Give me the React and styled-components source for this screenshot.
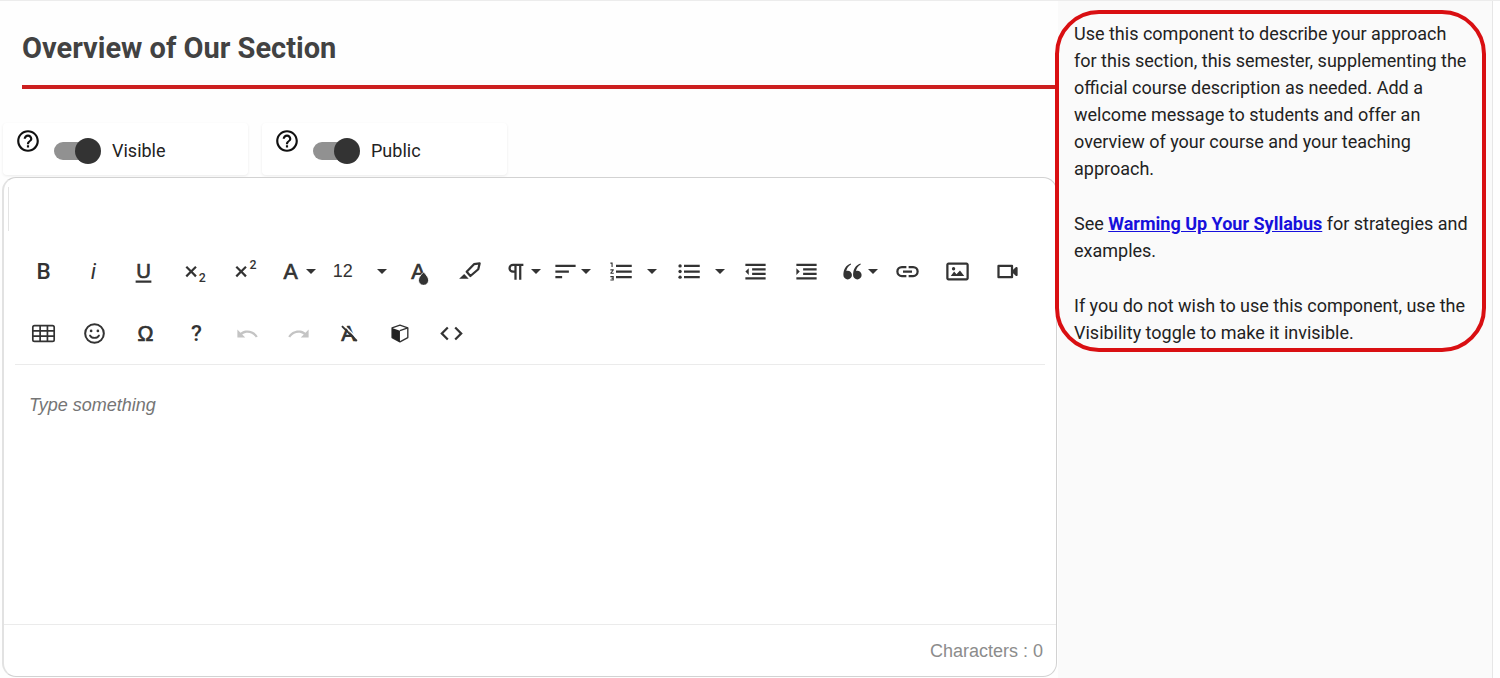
import React from "react";
import styled, { createGlobalStyle } from "styled-components";
import { MdHelpOutline } from "react-icons/md";

const GlobalStyle = createGlobalStyle`
  *, *::before, *::after { box-sizing: border-box; }
  body { margin: 0; background: #fefefe; font-family: Roboto, "Liberation Sans", sans-serif; color: #222; }
`;

const Page = styled.div`
  display: flex;
  align-items: stretch;
  min-height: 100vh;
  padding-right: 7px;
  border-top: 1px solid #ececec;
`;

const Main = styled.main`
  flex: 1;
  min-width: 0;
  display: flex;
  flex-direction: column;
`;

const Heading = styled.h1`
  margin: 0 0 0 22px;
  padding: 28px 0 18px;
  border-bottom: 4px solid #cc1f1f;
  font-size: 29px;
  line-height: 38px;
  font-weight: 700;
  color: #424242;
`;

const Toggles = styled.div`
  display: flex;
  gap: 14px;
  padding: 34px 0 2px 3px;
`;

const ToggleCard = styled.div`
  display: flex;
  align-items: flex-start;
  width: 245px;
  height: 52px;
  padding: 5px 0 0 12px;
  border-radius: 4px;
  background: #fff;
  box-shadow: 0 1px 3px rgba(0, 0, 0, 0.08);
`;

const HelpButton = styled.button`
  display: flex;
  padding: 0;
  border: 0;
  background: none;
  color: #111;
`;

const ToggleLabel = styled.label`
  display: flex;
  align-items: center;
  gap: 11px;
  margin: 10px 0 0 13px;
  font-size: 18px;
  line-height: 24px;
`;

const Switch = styled.input`
  appearance: none;
  position: relative;
  width: 47px;
  height: 26px;
  margin: 0;
  &::before {
    content: "";
    position: absolute;
    left: 0;
    top: 4px;
    width: 42px;
    height: 18px;
    border-radius: 9px;
    background: #919191;
  }
  &::after {
    content: "";
    position: absolute;
    left: ${(p) => (p.checked ? 21 : 0)}px;
    top: 0;
    width: 26px;
    height: 26px;
    border-radius: 50%;
    background: #333;
  }
`;

const Editor = styled.section`
  flex: 1;
  display: flex;
  flex-direction: column;
  margin: 0 1px 1px 2px;
  border: 1px solid #d2d2d2;
  border-left: 2px solid #e2e2e2;
  border-radius: 14px;
  background: #fff;
`;

const TopStrip = styled.div`
  height: 44px;
  margin: 9px 0 9px 4px;
  border-left: 1px solid #e4e4e4;
`;

const Toolbar = styled.div`
  display: flex;
  flex-direction: column;
  margin: 0 11px;
  padding: 0 12px 0 3px;
  border-bottom: 1px solid #ebebeb;
`;

const ToolRow = styled.div`
  display: flex;
  align-items: center;
  justify-content: ${(p) => (p.$spread ? "space-between" : "flex-start")};
  gap: ${(p) => (p.$spread ? 0 : 1)}px;
  height: 62px;
`;

const ToolButton = styled.button`
  display: flex;
  align-items: center;
  justify-content: ${(p) => (p.$wide ? "space-between" : "center")};
  gap: 2px;
  width: ${(p) => (p.$wide ? 73 : 50)}px;
  height: 44px;
  padding: ${(p) => (p.$wide ? "0 7px 0 12px" : p.$menu ? "0 0 0 3px" : "0")};
  border: 0;
  background: none;
  color: ${(p) => (p.disabled ? "#c4c4c4" : "#333")};
  font-family: "Liberation Sans", Arial, sans-serif;
  font-size: 18px;
`;

const Split = styled.div`
  display: flex;
`;

const CaretButton = styled(ToolButton)`
  width: 17px;
  padding-right: 4px;
`;

const Svg = styled.svg`
  flex: none;
  width: 27px;
  height: 27px;
  fill: currentColor;
  text {
    font-family: Roboto, sans-serif;
    font-weight: 500;
    text-anchor: middle;
  }
`;

const LightText = styled.text`
  && { font-weight: 400; }
`;

const SymbolText = styled.text`
  && {
    font-family: "Liberation Sans", Arial, sans-serif;
    font-weight: 400;
    stroke: currentColor;
    stroke-width: 0.6px;
  }
`;

const Caret = styled.span`
  border: 5px solid transparent;
  border-top-color: #333;
  border-bottom: 0;
`;

const Writing = styled.textarea`
  flex: 1;
  min-height: 257px;
  padding: 27px 25px;
  border: 0;
  outline: 0;
  resize: none;
  background: transparent;
  font-family: "Liberation Sans", Arial, sans-serif;
  font-size: 18px;
  line-height: 26px;
  &::placeholder { color: #757575; font-style: italic; opacity: 1; }
`;

const Counter = styled.div`
  padding: 13px 13px 12px;
  border-top: 1px solid #ebebeb;
  text-align: right;
  font-family: "Liberation Sans", Arial, sans-serif;
  font-size: 18px;
  line-height: 26px;
  color: #8c8c8c;
`;

const Aside = styled.aside`
  flex: 0 0 435px;
  border-right: 1px solid #e6e6e6;
  background: #fafafa;
`;

const Callout = styled.div`
  position: relative;
  margin: 9px 6px 0 -3px;
  padding: 6px 12px 2px 15px;
  border: 4px solid #d90f12;
  border-radius: 44px;
  font-size: 18px;
  line-height: 27px;
`;

const Para = styled.p`
  margin: 0 0 28px;
  &:last-child { margin-bottom: 0; }
`;

const Link = styled.a`
  color: #1710dc;
  font-weight: 700;
`;

const stroke = { fill: "none", stroke: "currentColor" };

const icons = {
  bold: <text x="12" y="19" fontSize="20">B</text>,
  italic: <LightText x="12" y="19" fontSize="20" fontStyle="italic">i</LightText>,
  underline: (
    <>
      <SymbolText x="12" y="18" fontSize="18">U</SymbolText>
      <path d="M5 20h14v2H5z" />
    </>
  ),
  sub: (
    <>
      <path d="M10.4 12l3.6 3.6-1.4 1.4L9 13.4 5.4 17 4 15.6 7.6 12 4 8.4 5.4 7 9 10.6 12.6 7 14 8.4z" />
      <text x="19" y="21" fontSize="11">2</text>
    </>
  ),
  sup: (
    <>
      <path d="M10.4 12l3.6 3.6-1.4 1.4L9 13.4 5.4 17 4 15.6 7.6 12 4 8.4 5.4 7 9 10.6 12.6 7 14 8.4z" />
      <text x="19.5" y="10" fontSize="11">2</text>
    </>
  ),
  family: <SymbolText x="12" y="19" fontSize="19">A</SymbolText>,
  color: (
    <>
      <SymbolText x="11" y="19" fontSize="19">A</SymbolText>
      <path d="M15.6 12.500s-4.500 4-4.500 7.300a4.500 4.500 0 0 0 9 0c0-3.300-4.500-7.300-4.500-7.300z" stroke="#fff" strokeWidth="0.800" />
    </>
  ),
  marker: (
    <>
      <path {...stroke} strokeWidth="2" strokeLinejoin="round" d="M9.500 12.300L16 5.500l5-.7-1.200 5.200-7 6z" />
      <path d="M7.300 14.200l4 4.300H2.800z" />
    </>
  ),
  paragraph: <path {...stroke} strokeWidth="2" d="M19 6H9.800a3.100 3.100 0 0 0 0 6.200H12M12 6v13.300M16.200 6v13.300" />,
  align: <path d="M3 6h18v2H3zM3 11h12v2H3zM3 16h6v2H3z" />,
  ordered: (
    <>
      <path d="M8 6h14v2H8zM8 11h14v2H8zM8 16h14v2H8z" />
      <path d="M3 17h2v.5H4v1h1v.5H3v1h3v-4H3zM4 8h1V4H3v1h1zM3 11h1.800L3 13.100v.9h3v-1H4.200L6 10.900V10H3z" />
    </>
  ),
  unordered: (
    <>
      <path d="M8 6h14v2H8zM8 11h14v2H8zM8 16h14v2H8z" />
      <circle cx="4.500" cy="7" r="1.500" />
      <circle cx="4.500" cy="12" r="1.500" />
      <circle cx="4.500" cy="17" r="1.500" />
    </>
  ),
  outdent: <path d="M3 5h18v2H3zM9 9h12v2H9zM9 13h12v2H9zM3 17h18v2H3zM3 12l3-3v6z" />,
  indent: <path d="M3 5h18v2H3zM9 9h12v2H9zM9 13h12v2H9zM3 17h18v2H3zM6 12L3 9v6z" />,
  quote: (
    <path d="M10.500 4.800C6.200 6.300 3.900 9.900 3.900 15.200a3.800 3.800 0 1 0 3.800-3.800c-.4 0-.8.1-1.200.2.500-2.400 1.800-4.400 4.200-5.800zM19.100 4.800c-4.300 1.500-6.600 5.100-6.600 10.400a3.800 3.800 0 1 0 3.800-3.800c-.4 0-.8.1-1.200.2.500-2.400 1.800-4.400 4.200-5.800z" />
  ),
  link: <path d="M11 17H7A5 5 0 0 1 7 7h4v2H7a3 3 0 0 0 0 6h4zM17 7h-4v2h4a3 3 0 0 1 0 6h-4v2h4a5 5 0 0 0 0-10zM16 11H8v2h8z" />,
  image: (
    <path d="M14.200 11l3.800 5H6l3-4 2.100 2.500zM8.500 11a1.500 1.500 0 1 0 0-3 1.500 1.500 0 0 0 0 3zM22 6v12c0 1.100-.9 2-2 2H4c-1.100 0-2-.9-2-2V6c0-1.100.9-2 2-2h16c1.100 0 2 .9 2 2zM20 6H4v12h16z" fillRule="evenodd" />
  ),
  video: (
    <path d="M15 8v8H5V8h10m2 2.500V7a1 1 0 0 0-1-1H4a1 1 0 0 0-1 1v10a1 1 0 0 0 1 1h12a1 1 0 0 0 1-1v-3.500l2.290 2.290A1 1 0 0 0 21 15.080V8.910a1 1 0 0 0-1.710-.71z" />
  ),
  table: (
    <>
      <rect {...stroke} strokeWidth="1.500" x="2.500" y="5" width="19" height="14" rx="1.500" />
      <path {...stroke} strokeWidth="1.500" d="M9 5v14M15.500 5v14M2.500 9.700h19M2.500 14.300h19" />
    </>
  ),
  smile: (
    <>
      <circle {...stroke} strokeWidth="1.800" cx="12" cy="12" r="8.300" />
      <circle cx="9" cy="9.700" r="1.200" />
      <circle cx="15" cy="9.700" r="1.200" />
      <path {...stroke} strokeWidth="1.600" strokeLinecap="round" d="M8 13.800c1.500 2.900 6.500 2.900 8 0" />
    </>
  ),
  omega: <SymbolText x="12" y="19" fontSize="19">Ω</SymbolText>,
  help: <text x="12" y="19" fontSize="20">?</text>,
  undo: <path d="M10.400 9.400c-1.700.3-3.200.9-4.600 2L3 8.500v7h7l-2.700-2.700c3.700-2.600 8.800-1.800 11.500 1.900.2.300.4.500.5.8l1.800-.9c-2.200-3.800-6.400-5.900-10.700-5.200z" />,
  redo: <path d="M13.600 9.400c1.700.3 3.200.9 4.600 2L21 8.500v7h-7l2.700-2.700c-3.700-2.600-8.800-1.800-11.500 1.900-.2.300-.4.500-.5.8l-1.800-.9c2.200-3.800 6.400-5.900 10.700-5.200z" />,
  clear: (
    <>
      <SymbolText x="11" y="19" fontSize="19">A</SymbolText>
      <path stroke="#fff" strokeWidth="1.300" fill="none" d="M7 4.500L20 17.500" />
      <path stroke="currentColor" strokeWidth="1.700" fill="none" d="M5.300 5.500L18.500 18.700" />
    </>
  ),
  cube: (
    <>
      <path d="M11.500 4.500l7 2.500v8.600l-7 3.900-7-3.900V7z" fill="#fff" stroke="#333" strokeWidth="1.200" strokeLinejoin="round" />
      <path d="M4.500 7l7 2.500v10l-7-3.900z" fill="#222" />
      <path d="M11.500 9.500l7-2.500" stroke="#333" strokeWidth="1.200" />
    </>
  ),
  code: <path d="M9.400 16.600L4.800 12l4.600-4.600L8 6l-6 6 6 6zM14.600 16.600l4.600-4.600-4.600-4.600L16 6l6 6-6 6z" />,
};

function Tool({ name, label, menu, disabled }) {
  return (
    <ToolButton type="button" aria-label={label} disabled={disabled} $menu={menu}>
      <Svg viewBox="0 0 24 24" aria-hidden="true">{icons[name]}</Svg>
      {menu && <Caret />}
    </ToolButton>
  );
}

function SplitTool({ name, label }) {
  return (
    <Split>
      <Tool name={name} label={label} />
      <CaretButton type="button" aria-label={`${label} options`}><Caret /></CaretButton>
    </Split>
  );
}

function Toggle({ id, label }) {
  const [on, setOn] = React.useState(true);
  return (
    <ToggleCard>
      <HelpButton type="button" aria-label={`About ${label}`}><MdHelpOutline size={26} /></HelpButton>
      <ToggleLabel htmlFor={id}>
        <Switch id={id} type="checkbox" role="switch" checked={on} onChange={(e) => setOn(e.target.checked)} />
        {label}
      </ToggleLabel>
    </ToggleCard>
  );
}

export default function App() {
  const [text, setText] = React.useState("");
  return (
    <Page>
      <GlobalStyle />
      <Main>
        <Heading>Overview of Our Section</Heading>
        <Toggles>
          <Toggle id="visible" label="Visible" />
          <Toggle id="public" label="Public" />
        </Toggles>
        <Editor>
          <TopStrip />
          <Toolbar role="toolbar" aria-label="Formatting">
            <ToolRow $spread>
              <Tool name="bold" label="Bold" />
              <Tool name="italic" label="Italic" />
              <Tool name="underline" label="Underline" />
              <Tool name="sub" label="Subscript" />
              <Tool name="sup" label="Superscript" />
              <Tool name="family" label="Font family" menu />
              <ToolButton type="button" $wide aria-label="Font size">12<Caret /></ToolButton>
              <Tool name="color" label="Text color" />
              <Tool name="marker" label="Background color" />
              <Tool name="paragraph" label="Paragraph format" menu />
              <Tool name="align" label="Align" menu />
              <SplitTool name="ordered" label="Ordered list" />
              <SplitTool name="unordered" label="Unordered list" />
              <Tool name="outdent" label="Decrease indent" />
              <Tool name="indent" label="Increase indent" />
              <Tool name="quote" label="Quote" menu />
              <Tool name="link" label="Insert link" />
              <Tool name="image" label="Insert image" />
              <Tool name="video" label="Insert video" />
            </ToolRow>
            <ToolRow>
              <Tool name="table" label="Insert table" />
              <Tool name="smile" label="Emoticons" />
              <Tool name="omega" label="Special characters" />
              <Tool name="help" label="Help" />
              <Tool name="undo" label="Undo" disabled />
              <Tool name="redo" label="Redo" disabled />
              <Tool name="clear" label="Clear formatting" />
              <Tool name="cube" label="Insert object" />
              <Tool name="code" label="Code view" />
            </ToolRow>
          </Toolbar>
          <Writing aria-label="Section overview" placeholder="Type something" value={text} onChange={(e) => setText(e.target.value)} />
          <Counter>Characters : {text.length}</Counter>
        </Editor>
      </Main>
      <Aside>
        <Callout>
          <Para>
            Use this component to describe your approach for this section, this semester, supplementing the official
            course description as needed. Add a welcome message to students and offer an overview of your course and
            your teaching approach.
          </Para>
          <Para>
            See <Link href="#warming-up">Warming Up Your Syllabus</Link> for strategies and examples.
          </Para>
          <Para>If you do not wish to use this component, use the Visibility toggle to make it invisible.</Para>
        </Callout>
      </Aside>
    </Page>
  );
}
